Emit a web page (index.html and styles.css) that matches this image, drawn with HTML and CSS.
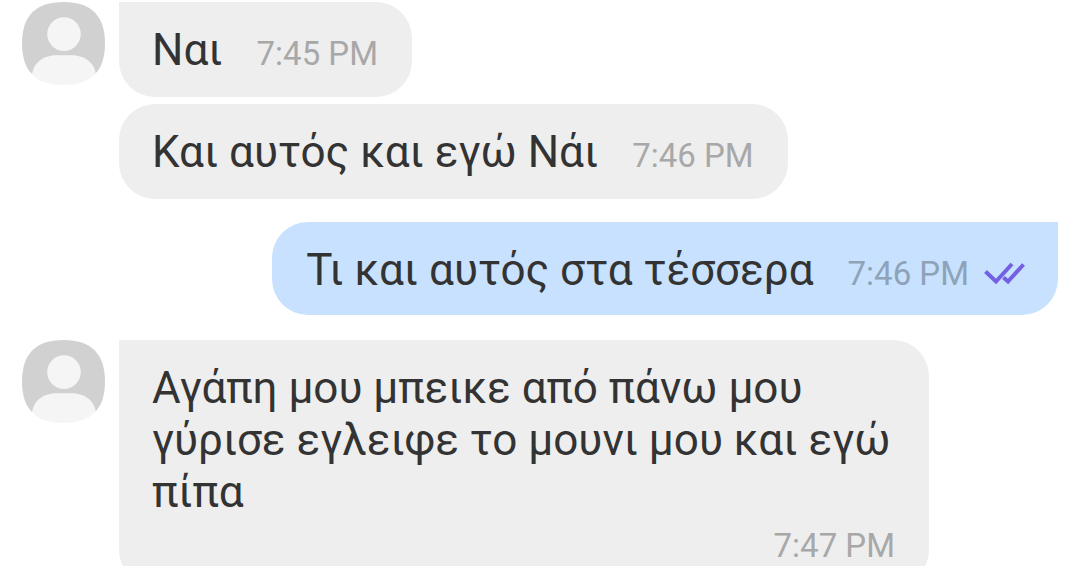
FILE: index.html
```html
<!DOCTYPE html>
<html lang="el">
<head>
    <meta charset="UTF-8">
    <meta name="viewport" content="width=device-width, initial-scale=1.0">
    <title>Chat</title>
    <link rel="stylesheet" href="styles.css">
</head>
<body>
    <div class="chat">
        <div class="row">
            <svg class="avatar" viewBox="0 0 84 84">
                <clipPath id="avatarShape">
                    <path d="M42 0C70 0 84 14 84 42C84 70 70 84 42 84C14 84 0 70 0 42C0 14 14 0 42 0Z"/>
                </clipPath>
                <g clip-path="url(#avatarShape)">
                    <rect width="84" height="73" fill="#d1d1d1"/>
                    <circle cx="42.5" cy="32.5" r="17" fill="#f5f5f5"/>
                    <path d="M10 84V74C12 60 23 54 35 54H50C62 54 73 60 75 74V84Z" fill="#f5f5f5"/>
                </g>
            </svg>
            <div class="bubble incoming first">
                <span class="text">Ναι</span>
                <span class="time">7:45 PM</span>
            </div>
        </div>
        <div class="row grouped">
            <div class="bubble incoming">
                <span class="text">Και αυτός και εγώ Νάι</span>
                <span class="time">7:46 PM</span>
            </div>
        </div>
        <div class="row own">
            <div class="bubble outgoing">
                <span class="text">Τι και αυτός στα τέσσερα</span>
                <span class="time">7:46 PM</span>
                <svg class="seen" viewBox="0 0 42 24">
                    <path d="M1.5 10.5L12 20.5L28 3M19.5 16.5L24 20.5L39.5 3.5" fill="none" stroke="#7360e2" stroke-width="4"/>
                </svg>
            </div>
        </div>
        <div class="row reply">
            <svg class="avatar" viewBox="0 0 84 84">
                <g clip-path="url(#avatarShape)">
                    <rect width="84" height="73" fill="#d1d1d1"/>
                    <circle cx="42.5" cy="32.5" r="17" fill="#f5f5f5"/>
                    <path d="M10 84V74C12 60 23 54 35 54H50C62 54 73 60 75 74V84Z" fill="#f5f5f5"/>
                </g>
            </svg>
            <div class="bubble incoming first long">
                <p class="text">Αγάπη μου μπεικε από πάνω μου<br>γύρισε εγλειφε το μουνι μου και εγώ<br>πίπα</p>
                <span class="time">7:47 PM</span>
            </div>
        </div>
    </div>
</body>
</html>
```

FILE: styles.css
```css
body {
    margin: 0;
    background-color: #fff;
    color: #333;
    font-family: Roboto, sans-serif;
    overflow: hidden;
}
.chat {
    height: 566px;
    padding: 2px 22px 0;
    box-sizing: border-box;
    overflow: hidden;
}
.row {
    display: flex;
    align-items: flex-start;
}
.avatar {
    width: 83px;
    height: 83px;
    margin-right: 14px;
    flex-shrink: 0;
}
.bubble {
    display: flex;
    align-items: baseline;
    height: 95px;
    padding: 0 34px 0 33px;
    box-sizing: border-box;
    border-radius: 36px;
    white-space: nowrap;
}
.incoming {
    background-color: #eee;
}
.first {
    border-top-left-radius: 0;
}
.grouped {
    margin: 7px 0 0 97px;
}
.own {
    justify-content: flex-end;
    margin-top: 23px;
}
.outgoing {
    height: 93px;
    padding: 0 32px 0 34px;
    background-color: #c7e1fe;
    border-top-right-radius: 0;
}
.text {
    margin: 0;
    font-size: 44px;
    line-height: 97px;
}
.time {
    margin-left: 34px;
    font-size: 33px;
    color: #a8a8a8;
}
.outgoing .time {
    color: #8ea2b8;
}
.seen {
    width: 42px;
    height: 24px;
    margin-left: 15px;
}
.reply {
    margin-top: 25px;
}
.long {
    flex-direction: column;
    width: 810px;
    height: 246px;
    padding-top: 22px;
}
.long .text {
    line-height: 52px;
}
.long .time {
    align-self: flex-end;
    margin: 8px 0 0;
}
```
